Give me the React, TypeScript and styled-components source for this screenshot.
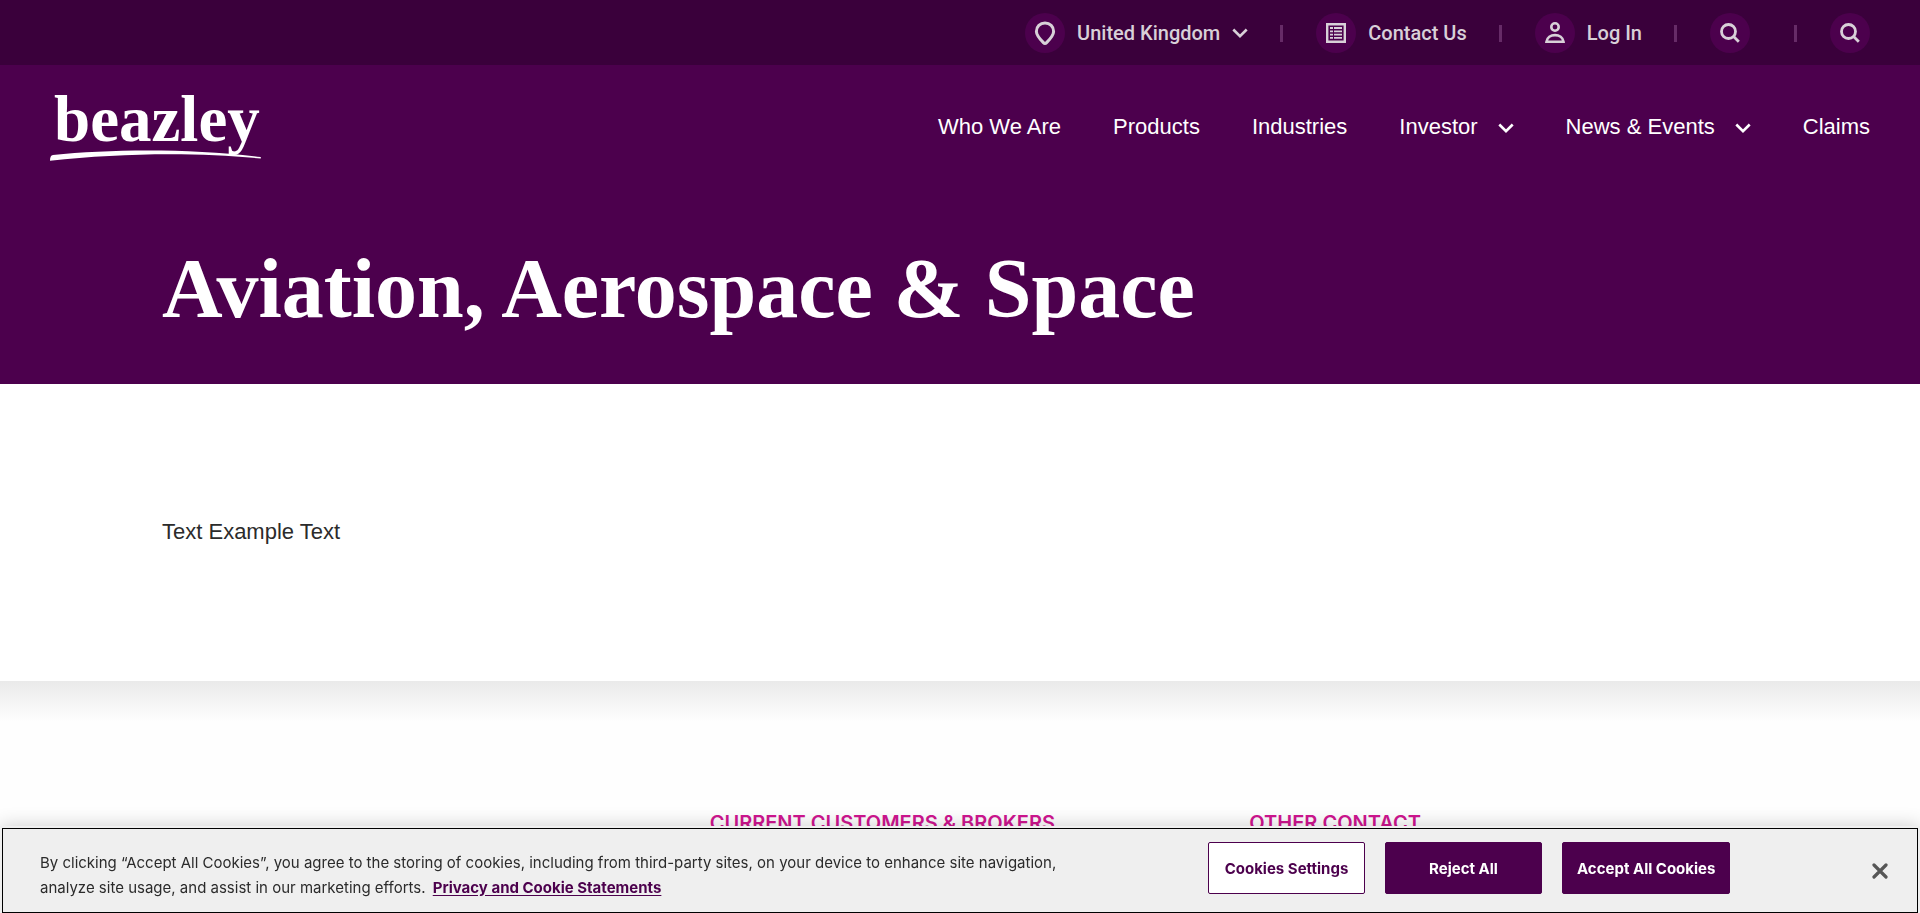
import React from 'react';
import styled, { createGlobalStyle } from 'styled-components';

const sans = '"Liberation Sans", Arial, sans-serif';
const medium = 'Roboto, "Liberation Sans", sans-serif';
const inter = 'Inter, "Liberation Sans", sans-serif';
const serif = '"Liberation Serif", "Times New Roman", serif';

const GlobalStyle = createGlobalStyle`
  *, *::before, *::after { box-sizing: border-box; }
  body { margin: 0; background: #fff; color: #2b2b2b; font-family: ${sans}; }
  a { color: inherit; text-decoration: none; }
  button { font: inherit; color: inherit; border: 0; padding: 0; background: none; cursor: pointer; }
  h1, h2, p, ul { margin: 0; padding: 0; }
  ul { list-style: none; }
  svg { display: block; }
`;

const Page = styled.div`
  display: flex;
  flex-direction: column;
  min-height: 100vh;
`;

const UtilityBar = styled.ul`
  display: flex;
  justify-content: flex-end;
  align-items: center;
  height: 65px;
  padding: 0 50px;
  background: #3a003b;
  color: #d8d0d8;
  font: 500 20px/24px ${medium};
`;

const UtilityItem = styled.li`
  display: flex;
  align-items: center;

  & + &::before {
    content: '';
    width: 3px;
    height: 17px;
    margin: 1px 33px 0 32px;
    background: #662b67;
  }
`;

const UtilityLink = styled.a`
  display: flex;
  align-items: center;
  gap: 12px;
`;

const UtilityButton = styled.button<{ $trail?: number }>`
  display: flex;
  align-items: center;
  gap: 12px;
  margin-right: ${({ $trail = 0 }) => $trail}px;
`;

const Disc = styled.span`
  display: grid;
  place-items: center;
  width: 40px;
  height: 40px;
  border-radius: 50%;
  background: #4c004d;
`;

const Hero = styled.div`
  min-height: 319px;
  background: #4c004d;
  color: #fff;
`;

const Masthead = styled.header`
  display: flex;
  justify-content: space-between;
  padding: 24px 50px 0;
`;

const Logo = styled.a`
  display: flex;
  flex-direction: column;
  font: 700 65px/60px ${serif};

  span { padding-left: 4px; }
`;

const Nav = styled.nav`
  display: flex;
  align-items: center;
  gap: 52px;
  height: 76px;
  font: 22px/28px ${sans};
`;

const NavButton = styled.button`
  display: flex;
  align-items: center;
  gap: 20px;
`;

const Title = styled.h1`
  padding: 78px 162px 0;
  font: 700 84px/92px ${serif};
`;

const Content = styled.main`
  min-height: 297px;
  padding: 134px 162px 0;
  font: 22px/28px ${sans};
`;

const Footer = styled.footer`
  flex: 1;
  display: grid;
  grid-template-columns: 547fr 539fr 508fr;
  padding: 130px 162px 0;
  background: linear-gradient(#eaeaea, #fefefe 40px);
`;

const FooterHeading = styled.h2`
  color: #cf1590;
  font: 600 20px/24px ${inter};
  text-transform: uppercase;
`;

const CookieBanner = styled.section`
  position: fixed;
  inset: auto 0 -2px;
  display: flex;
  align-items: center;
  height: 89px;
  padding: 0 32px 0 40px;
  background: #efefef;
  box-shadow: 0 0 18px rgba(0, 0, 0, 0.2);
  outline: 1px solid #000;
  outline-offset: -3px;
  font: 15px/25px ${inter};
`;

const CookieText = styled.p`
  width: 1040px;
  padding-top: 8px;

  a {
    margin-left: 3px;
    color: #4c004d;
    font-weight: 700;
    text-decoration: underline;
    text-underline-offset: 2px;
  }
`;

const CookieActions = styled.div`
  display: flex;
  gap: 20px;
  margin: 0 auto 5px 128px;
`;

const CookieButton = styled.button<{ $outlined?: boolean }>`
  min-width: 157px;
  height: 52px;
  padding: 0 14px;
  border: 1px solid #4c004d;
  border-radius: 2px;
  background: ${({ $outlined }) => ($outlined ? '#fff' : '#4c004d')};
  color: ${({ $outlined }) => ($outlined ? '#4c004d' : '#fff')};
  font-weight: 700;
`;

const ChevronSvg = styled.svg`
  margin-top: 2px;
`;

const Chevron = () => (
  <ChevronSvg width="16" height="11" viewBox="0 0 16 11" fill="none" stroke="currentColor" strokeWidth="2.6" aria-hidden="true">
    <path d="M1.3 1.5 8 8.2l6.7-6.7" />
  </ChevronSvg>
);

const PinIcon = () => (
  <svg width="22" height="24" viewBox="0 0 22 24" fill="none" stroke="currentColor" strokeWidth="3" aria-hidden="true">
    <path d="M11 2c-5 0-8.600 3.700-8.600 8.400 0 3.600 3.400 7.500 7 11.200q1.600 1.600 3.200 0c3.600-3.700 7-7.600 7-11.200C19.600 5.700 16 2 11 2z" />
  </svg>
);

const ListIcon = () => (
  <svg width="20" height="20" viewBox="0 0 20 20" fill="none" stroke="currentColor" aria-hidden="true">
    <path strokeWidth="2.4" d="M1.200 1.200h17.600v17.600H1.200z" />
    <path strokeWidth="1.800" d="M4 5h3M4 8.300h3M4 11.600h3M4 14.900h3M8 5h8M8 8.300h8M8 11.600h8M8 14.900h8" />
  </svg>
);

const UserIcon = () => (
  <svg width="20" height="22" viewBox="0 0 20 22" fill="none" stroke="currentColor" strokeWidth="2.600" aria-hidden="true">
    <circle cx="10" cy="5" r="3.700" />
    <path d="M1.500 19.700c.6-4 4.200-6.600 8.500-6.600s7.900 2.600 8.500 6.600z" />
  </svg>
);

const SearchIcon = () => (
  <svg width="20" height="20" viewBox="0 0 20 20" fill="none" stroke="currentColor" strokeWidth="2.800" aria-hidden="true">
    <circle cx="8.500" cy="8.500" r="7" />
    <path d="m13.300 13.300 5.500 5.500" />
  </svg>
);

const CloseIcon = () => (
  <svg width="16" height="16" viewBox="0 0 16 16" stroke="#565656" strokeWidth="3.200" strokeLinecap="round" aria-hidden="true">
    <path d="m2 2 12 12M14 2 2 14" />
  </svg>
);

const Swoosh = () => (
  <svg width="211" height="12" viewBox="0 0 211 12" fill="currentColor" aria-hidden="true">
    <path d="M0 11.700c0-3.400.8-5.400 3-5.700C60 .2 140-.8 210.800 8v1.600C150 3 70 3.800 0 11.700z" />
  </svg>
);

export default function App() {
  return (
    <Page>
      <GlobalStyle />
      <UtilityBar>
        <UtilityItem>
          <UtilityButton type="button">
            <Disc><PinIcon /></Disc>
            United Kingdom
            <Chevron />
          </UtilityButton>
        </UtilityItem>
        <UtilityItem>
          <UtilityLink href="#contact">
            <Disc><ListIcon /></Disc>
            Contact Us
          </UtilityLink>
        </UtilityItem>
        <UtilityItem>
          <UtilityLink href="#login">
            <Disc><UserIcon /></Disc>
            Log In
          </UtilityLink>
        </UtilityItem>
        <UtilityItem>
          <UtilityButton type="button" aria-label="Search" $trail={12}>
            <Disc><SearchIcon /></Disc>
          </UtilityButton>
        </UtilityItem>
        <UtilityItem>
          <UtilityButton type="button" aria-label="Search the site">
            <Disc><SearchIcon /></Disc>
          </UtilityButton>
        </UtilityItem>
      </UtilityBar>

      <Hero>
        <Masthead>
          <Logo href="#home">
            <span>beazley</span>
            <Swoosh />
          </Logo>
          <Nav>
            <a href="#who-we-are">Who We Are</a>
            <a href="#products">Products</a>
            <a href="#industries">Industries</a>
            <NavButton type="button">Investor <Chevron /></NavButton>
            <NavButton type="button">News &amp; Events <Chevron /></NavButton>
            <a href="#claims">Claims</a>
          </Nav>
        </Masthead>
        <Title>Aviation, Aerospace &amp; Space</Title>
      </Hero>

      <Content>
        <p>Text Example Text</p>
      </Content>

      <Footer>
        <div />
        <FooterHeading>Current Customers &amp; Brokers</FooterHeading>
        <FooterHeading>Other Contact</FooterHeading>
      </Footer>

      <CookieBanner aria-label="Cookie consent">
        <CookieText>
          By clicking “Accept All Cookies”, you agree to the storing of cookies, including from third-party sites, on
          your device to enhance site navigation, analyze site usage, and assist in our marketing efforts.{' '}
          <a href="#privacy">Privacy and Cookie Statements</a>
        </CookieText>
        <CookieActions>
          <CookieButton type="button" $outlined>Cookies Settings</CookieButton>
          <CookieButton type="button">Reject All</CookieButton>
          <CookieButton type="button">Accept All Cookies</CookieButton>
        </CookieActions>
        <button type="button" aria-label="Close"><CloseIcon /></button>
      </CookieBanner>
    </Page>
  );
}
